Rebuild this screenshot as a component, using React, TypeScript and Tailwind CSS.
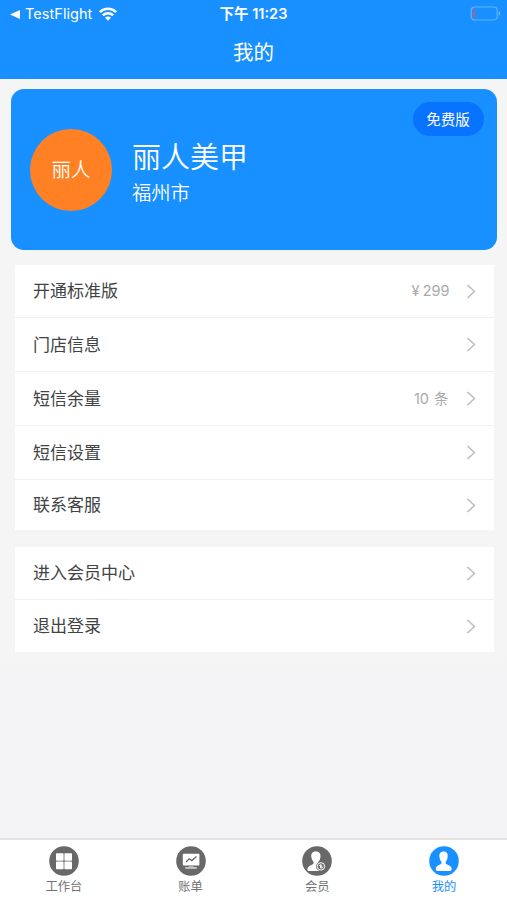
import React from "react";
import clsx from "clsx";

type MenuItem = {
  label: string;
  value?: string;
  valueClass?: string;
  height: string;
};

const accountItems: MenuItem[] = [
  { label: "开通标准版", value: "¥ 299", valueClass: "[word-spacing:-1px]", height: "h-[53px]" },
  { label: "门店信息", height: "h-[54px]" },
  { label: "短信余量", value: "10 条", valueClass: "[word-spacing:1px] pr-px", height: "h-[54px]" },
  { label: "短信设置", height: "h-[54px]" },
  { label: "联系客服", height: "h-[50px]" },
];

const systemItems: MenuItem[] = [
  { label: "进入会员中心", height: "h-[53px]" },
  { label: "退出登录", height: "h-[52px]" },
];

const StatusBar = () => (
  <div className="grid h-[28px] grid-cols-3 items-center pr-[6px] pl-2 text-[14.5px] leading-none">
    <div className="flex items-center">
      <svg className="ml-[2px] h-[9px] w-[10px]" viewBox="0 0 10 9" fill="currentColor">
        <path d="M0 4.5 10 0v9z" />
      </svg>
      <span className="ml-[5px] text-[14.5px] tracking-[0.05px]">TestFlight</span>
      <svg className="ml-[7px] h-[14px] w-[18px]" viewBox="0 0 18 14" fill="none" stroke="currentColor" strokeWidth="2.5">
        <path d="M.9 5.2a11.4 11.4 0 0 1 16.2 0M3.9 8.3a7.2 7.2 0 0 1 10.2 0" />
        <path d="M9 13.8 6 10.8a4.2 4.2 0 0 1 6 0z" fill="currentColor" stroke="none" />
      </svg>
    </div>
    <div className="pr-[2px] text-center font-semibold">下午 11:23</div>
    <div className="flex justify-end pb-px">
      <svg className="h-[15px] w-[31px]" viewBox="0 0 31 15" fill="none">
        <rect x="1.2" y="1" width="26" height="13" rx="3.5" stroke="#5eb3ff" strokeWidth="1.2" />
        <path d="M4 4v7" stroke="#b4607c" strokeWidth="2" strokeLinecap="round" />
        <path d="M28.7 5.2c2 .7 2 3.9 0 4.6z" fill="#72bdff" />
      </svg>
    </div>
  </div>
);

const ProfileCard = () => (
  <section className="mx-[10.5px] mt-[10px] flex h-[161px] justify-between rounded-[13px] bg-[#1990ff] text-white">
    <div className="flex items-center pl-[19.5px]">
      <div className="flex size-[82px] items-center justify-center rounded-full bg-[#ff8124] pt-[3px] text-[19.5px] font-[350]">
        丽人
      </div>
      <div className="ml-5 pt-2">
        <div className="text-[29px] leading-[38px] font-[350]">丽人美甲</div>
        <div className="text-[19.3px] leading-[32px] font-[350]">福州市</div>
      </div>
    </div>
    <div className="mt-[13px] mr-[13px] flex h-[34px] w-[71px] items-center justify-center rounded-full bg-[#0873ff] pt-[2px] text-[14.5px]">
      免费版
    </div>
  </section>
);

const MenuList = ({ items, className }: { items: MenuItem[]; className?: string }) => (
  <ul className={clsx("mr-[13.5px] ml-[14.5px] bg-white", className)}>
    {items.map((item) => (
      <li
        key={item.label}
        className={clsx(
          "flex items-center border-b border-[#f0f0f0] pr-[18px] pl-[18.5px] last:border-b-0",
          item.height
        )}
      >
        <span className="flex-1 pt-[2px] text-[17px] text-[#414444]">{item.label}</span>
        {item.value && (
          <span className={clsx("mr-[16px] text-[14.5px] leading-5 text-[#aaa]", item.valueClass)}>{item.value}</span>
        )}
        <svg className="h-[15px] w-[10px]" viewBox="0 0 10 15" fill="none" stroke="#bcbcbc" strokeWidth="1.5">
          <path d="m1.5 1 7 6.5-7 6.5" />
        </svg>
      </li>
    ))}
  </ul>
);

const WorkbenchIcon = () => (
  <svg className="size-[30px]" viewBox="0 0 30 30">
    <circle cx="15" cy="15" r="14.8" fill="#686868" />
    <g fill="#fff">
      <rect x="7" y="7.2" width="7.6" height="7.6" rx="0.8" />
      <rect x="15.4" y="7.2" width="7.6" height="7.6" rx="0.8" />
      <rect x="7" y="15.6" width="7.6" height="7.6" rx="0.8" />
      <rect x="15.4" y="15.6" width="7.6" height="7.6" rx="0.8" />
    </g>
  </svg>
);

const BillIcon = () => (
  <svg className="size-[30px]" viewBox="0 0 30 30">
    <circle cx="15" cy="15" r="14.8" fill="#686868" />
    <rect x="6.8" y="7.8" width="16.6" height="11.8" rx="0.8" fill="#fff" />
    <path d="m10 16 3.2-3.2 2.7 1.8 4.6-4" fill="none" stroke="#686868" strokeWidth="1.3" />
    <path d="M12.8 19.6h4.8v1.6h-4.8z" fill="#aaa" />
    <path d="M9.2 21.2h11.6v1.5H9.2z" fill="#ddd" />
  </svg>
);

const MemberIcon = () => (
  <svg className="size-[30px]" viewBox="0 0 30 30">
    <circle cx="15" cy="15" r="14.8" fill="#686868" />
    <path
      d="M13.6 5.4c-3 0-4.7 2.1-4.3 5 .2 2.3 1 4 2.2 5.1v2c-.4 1.5-5.8 1.9-6.1 5.7-.1 1.2.4 1.8 1.3 1.8h12.8l-3-7.4v-2.1c1.2-1.1 1.8-2.8 2-5.1.3-2.9-1.3-5-4.9-5z"
      fill="#fff"
    />
    <circle cx="19" cy="20.4" r="4.9" fill="#686868" />
    <circle cx="19" cy="20.4" r="3.7" fill="none" stroke="#fff" strokeWidth="1" />
    <path d="m17.2 20 1.3-1.5v3.8M20.8 20.8l-1.1 1.5v-3.6" fill="none" stroke="#fff" strokeWidth="0.9" />
  </svg>
);

const MineIcon = () => (
  <svg className="size-[30px]" viewBox="0 0 30 30">
    <circle cx="15" cy="15" r="14.8" fill="#1990ff" />
    <path
      d="M14.7 5.4c-3 0-4.7 2-4.3 5.2.2 2.3.9 4 2 5.1v1.9c-.5 1.4-5.3 1.4-5.6 5-.1 1.7.5 2.3 1.4 2.3h13c.9 0 1.5-.6 1.4-2.3-.3-3.6-5.4-3.6-5.9-5v-1.9c1.1-1.1 1.8-2.8 2-5.1.4-3.2-1-5.2-4-5.2z"
      fill="#fff"
    />
  </svg>
);

const tabs = [
  { label: "工作台", icon: <WorkbenchIcon /> },
  { label: "账单", icon: <BillIcon /> },
  { label: "会员", icon: <MemberIcon /> },
  { label: "我的", icon: <MineIcon />, active: true },
];

const TabBar = () => (
  <nav className="grid h-[62px] grid-cols-4 border-t-2 border-[#e2e2e4] bg-white">
    {tabs.map((tab) => (
      <div
        key={tab.label}
        className={clsx(
          "flex flex-col items-center pt-[6px] pl-px text-[12.3px]",
          tab.active ? "text-[#1990ff]" : "text-[#737373]"
        )}
      >
        {tab.icon}
        <span className="mt-[2px] leading-[18px]">{tab.label}</span>
      </div>
    ))}
  </nav>
);

const App = () => {
  return (
    <div className="flex h-screen w-full flex-col bg-[#f4f4f6] font-['Inter','Noto_Sans_CJK_SC',sans-serif]">
      <header className="h-[79px] bg-[#1990ff] text-white">
        <StatusBar />
        <h1 className="text-center text-[20.5px] leading-[50px]">我的</h1>
      </header>
      <main className="flex-1 bg-linear-to-b from-[#f5f5f5] from-75% to-[#f4f4f7] to-80%">
        <ProfileCard />
        <MenuList items={accountItems} className="mt-[15px]" />
        <MenuList items={systemItems} className="mt-[17px]" />
      </main>
      <TabBar />
    </div>
  );
};

export default App;
